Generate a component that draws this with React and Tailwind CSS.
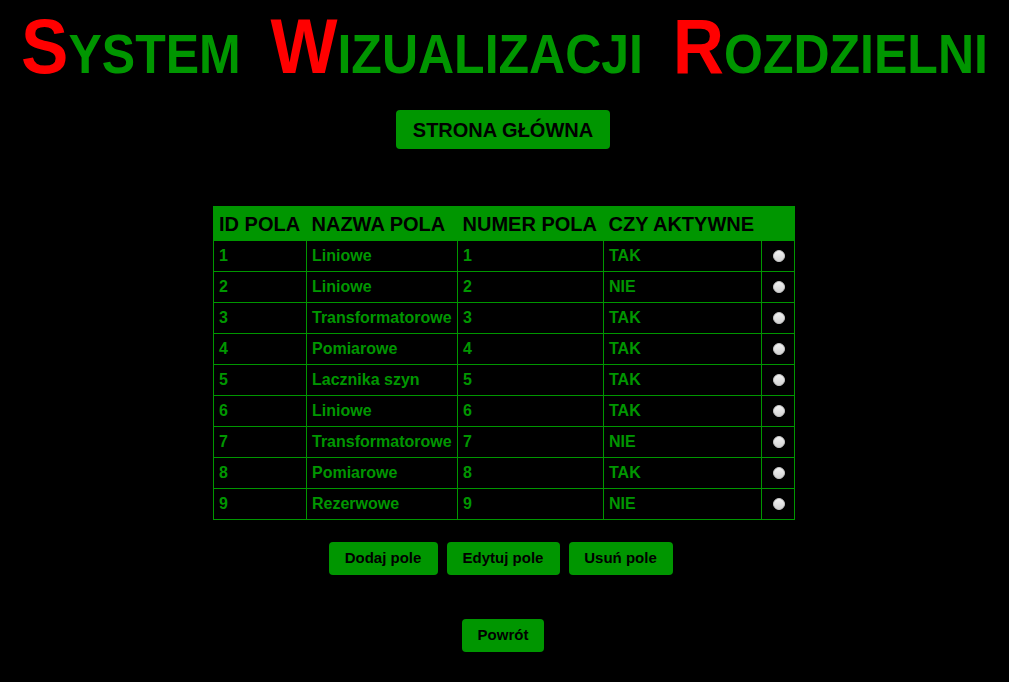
import React from "react";

const rows = [
  [1, "Liniowe", 1, "TAK"],
  [2, "Liniowe", 2, "NIE"],
  [3, "Transformatorowe", 3, "TAK"],
  [4, "Pomiarowe", 4, "TAK"],
  [5, "Lacznika szyn", 5, "TAK"],
  [6, "Liniowe", 6, "TAK"],
  [7, "Transformatorowe", 7, "NIE"],
  [8, "Pomiarowe", 8, "TAK"],
  [9, "Rezerwowe", 9, "NIE"],
];

function Cap({ children }) {
  return <span className="text-[#ff0000]">{children}</span>;
}

export default function App() {
  return (
    <div className="min-h-[682px] w-full bg-black font-['Liberation_Sans',Arial,sans-serif] flex flex-col items-center pr-[3px]">
      <h1 className="mt-[3px] text-[71px] leading-[88px] font-bold text-[#009600] [font-variant:small-caps] whitespace-nowrap scale-y-[1.1] ml-[3px] [word-spacing:10px]">
        <Cap>S</Cap>ystem <Cap>W</Cap>izualizacji <Cap>R</Cap>ozdzielni
      </h1>
      <button className="mt-[19px] w-[214px] h-[39px] rounded-[4px] bg-[#009600] text-black font-bold text-[20px]">
        STRONA GŁÓWNA
      </button>
      <table className="mt-[57px] border-collapse border border-[#009600] w-[582px] ml-[2px]">
        <thead>
          <tr className="bg-[#009600] text-black text-[20px] font-bold h-[34px]">
            <th className="text-left pl-[5px] w-[93px] font-bold">ID POLA</th>
            <th className="text-left pl-[5px] w-[151px] font-bold">NAZWA POLA</th>
            <th className="text-left pl-[5px] w-[146px] font-bold">NUMER POLA</th>
            <th className="text-left pl-[5px] w-[158px] font-bold">CZY AKTYWNE</th>
            <th className="w-[33px]"></th>
          </tr>
        </thead>
        <tbody>
          {rows.map((r) => (
            <tr key={r[0]} className="h-[31px] text-[#009600] text-[16px] font-bold">
              <td className="border border-[#009600] pl-[5px]">{r[0]}</td>
              <td className="border border-[#009600] pl-[5px] whitespace-nowrap">{r[1]}</td>
              <td className="border border-[#009600] pl-[5px]">{r[2]}</td>
              <td className="border border-[#009600] pl-[5px]">{r[3]}</td>
              <td className="border border-[#009600]">
                <div className="flex justify-center pl-[1px]">
                  <span className="block w-[12px] h-[12px] rounded-full bg-gradient-to-b from-[#f2f2f2] to-[#d4d4d4] border border-[#c4c4c4]"></span>
                </div>
              </td>
            </tr>
          ))}
        </tbody>
      </table>
      <div className="mt-[22px] flex gap-[8px] mr-[5px]">
        <button className="w-[109px] h-[33px] rounded-[4px] bg-[#009600] text-black font-bold text-[15px]">Dodaj pole</button>
        <button className="w-[113px] h-[33px] rounded-[4px] bg-[#009600] text-black font-bold text-[15px] ml-[1px]">Edytuj pole</button>
        <button className="w-[104px] h-[33px] rounded-[4px] bg-[#009600] text-black font-bold text-[15px] ml-[1px]">Usuń pole</button>
      </div>
      <button className="mt-[44px] w-[82px] h-[33px] rounded-[4px] bg-[#009600] text-black font-bold text-[15px]">Powrót</button>
    </div>
  );
}
